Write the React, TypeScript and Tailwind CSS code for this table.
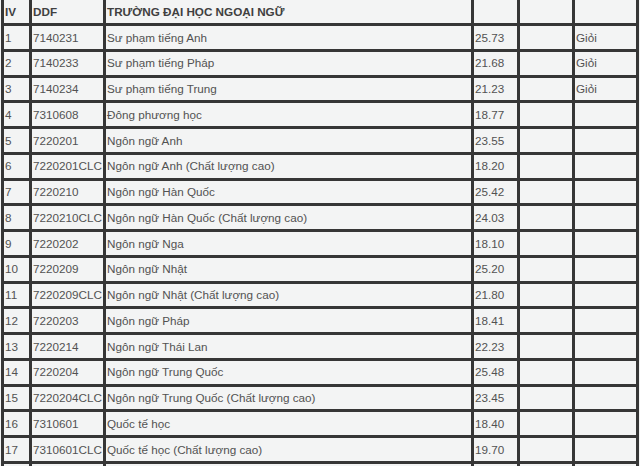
import React from "react";

type Row = [string, string, string, string, string];

const rows: Row[] = [
  ["1", "7140231", "Sư phạm tiếng Anh", "25.73", "Giỏi"],
  ["2", "7140233", "Sư phạm tiếng Pháp", "21.68", "Giỏi"],
  ["3", "7140234", "Sư phạm tiếng Trung", "21.23", "Giỏi"],
  ["4", "7310608", "Đông phương học", "18.77", ""],
  ["5", "7220201", "Ngôn ngữ Anh", "23.55", ""],
  ["6", "7220201CLC", "Ngôn ngữ Anh (Chất lượng cao)", "18.20", ""],
  ["7", "7220210", "Ngôn ngữ Hàn Quốc", "25.42", ""],
  ["8", "7220210CLC", "Ngôn ngữ Hàn Quốc (Chất lượng cao)", "24.03", ""],
  ["9", "7220202", "Ngôn ngữ Nga", "18.10", ""],
  ["10", "7220209", "Ngôn ngữ Nhật", "25.20", ""],
  ["11", "7220209CLC", "Ngôn ngữ Nhật (Chất lượng cao)", "21.80", ""],
  ["12", "7220203", "Ngôn ngữ Pháp", "18.41", ""],
  ["13", "7220214", "Ngôn ngữ Thái Lan", "22.23", ""],
  ["14", "7220204", "Ngôn ngữ Trung Quốc", "25.48", ""],
  ["15", "7220204CLC", "Ngôn ngữ Trung Quốc (Chất lượng cao)", "23.45", ""],
  ["16", "7310601", "Quốc tế học", "18.40", ""],
  ["17", "7310601CLC", "Quốc tế học (Chất lượng cao)", "19.70", ""],
  ["", "", "", "", ""],
];

const Cell: React.FC<{ children?: React.ReactNode; bold?: boolean }> = ({ children, bold }) => (
  <div
    className={
      "h-[22.75px] bg-[#f3f4f4] pl-[1px] flex items-center whitespace-nowrap overflow-hidden " +
      (bold ? "font-bold text-[#404040]" : "text-[#525252]")
    }
  >
    {children}
  </div>
);

export default function App() {
  return (
    <div className="w-[640px] h-[466px] overflow-hidden bg-[#f3f4f4]">
      <div
        className="ml-[1px] mt-[-2.75px] w-[638px] grid grid-cols-[25px_71px_365px_43px_52px_61px] gap-[3px] p-[3px] bg-[#363636] text-[11.7px] leading-none"
        style={{ fontFamily: '"Liberation Sans", Arial, sans-serif' }}
      >
        <Cell bold>IV</Cell>
        <Cell bold>DDF</Cell>
        <Cell bold>TRƯỜNG ĐẠI HỌC NGOẠI NGỮ</Cell>
        <Cell />
        <Cell />
        <Cell />
        {rows.map((r, i) => (
          <React.Fragment key={i}>
            <Cell>{r[0]}</Cell>
            <Cell>{r[1]}</Cell>
            <Cell>{r[2]}</Cell>
            <Cell>{r[3]}</Cell>
            <Cell />
            <Cell>{r[4]}</Cell>
          </React.Fragment>
        ))}
      </div>
    </div>
  );
}
